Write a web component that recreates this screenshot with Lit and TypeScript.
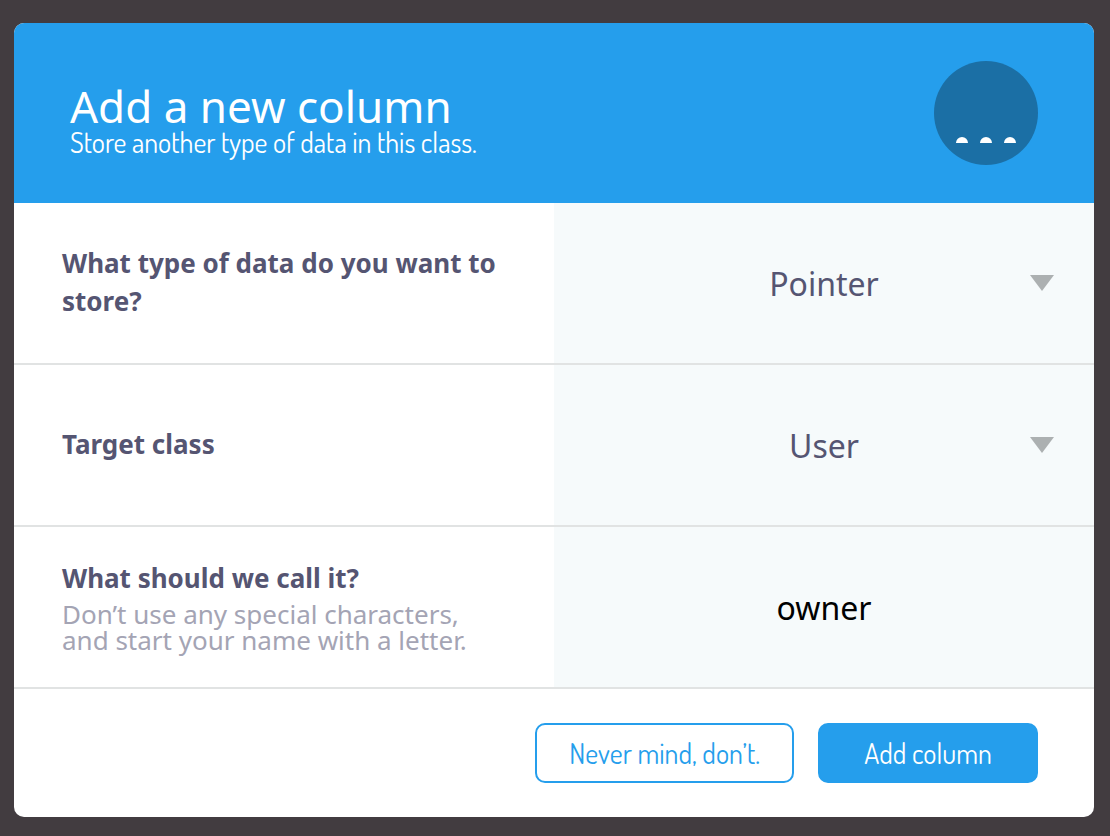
import { LitElement, html, css } from "lit";
import { customElement, state } from "lit/decorators.js";

@customElement("app-root")
export class AppRoot extends LitElement {
  static styles = css`
    :host {
      display: block;
      box-sizing: border-box;
      min-height: 100vh;
      padding: 23px 16px 19px 14px;
      background: #423c40;
      color: #555572;
      font-family: "Noto Sans", sans-serif;
    }
    * {
      box-sizing: border-box;
    }
    .modal {
      overflow: hidden;
      border-radius: 10px;
      background: #fff;
    }
    .header {
      display: flex;
      align-items: center;
      justify-content: space-between;
      gap: 24px;
      min-height: 180px;
      padding: 24px 56px;
      background: #259eec;
      color: #fff;
    }
    .heading {
      padding-top: 14px;
    }
    .title {
      margin: 0;
      font-size: 44px;
      line-height: 44px;
      font-weight: 400;
    }
    .subtitle {
      margin: 0;
      font-family: Dosis, Lato, sans-serif;
      font-size: 28px;
      line-height: 28px;
      font-weight: 400;
    }
    .badge {
      flex: none;
      width: 104px;
      height: 104px;
    }
    .field {
      display: grid;
      grid-template-columns: 1fr 1fr;
      min-height: 162px;
      border-bottom: 2px solid #e1e3e3;
    }
    .text {
      display: flex;
      flex-direction: column;
      justify-content: center;
      padding: 14px 48px 16px;
    }
    .label {
      font-size: 26px;
      line-height: 38px;
      font-weight: 700;
    }
    .hint {
      margin: 4px 0 0;
      color: #a4a4b4;
      font-size: 26px;
      line-height: 26px;
    }
    .control {
      position: relative;
      display: flex;
      background: #f6fafb;
    }
    .input {
      width: 100%;
      margin: 0;
      padding: 2px 40px 0;
      border: 0;
      border-radius: 0;
      background: transparent;
      appearance: none;
      color: #555572;
      font: 400 32px / 44px "Noto Sans", sans-serif;
      text-align: center;
      text-align-last: center;
    }
    .name {
      color: #000;
    }
    .arrow {
      position: absolute;
      top: 50%;
      right: 40px;
      width: 24px;
      height: 16px;
      margin-top: -8px;
      pointer-events: none;
    }
    .footer {
      display: flex;
      justify-content: flex-end;
      gap: 24px;
      padding: 34px 56px;
    }
    .button {
      min-width: 220px;
      height: 60px;
      padding: 0 32px;
      border: 2px solid #259eec;
      border-radius: 10px;
      background: #fff;
      color: #259eec;
      font: 400 28px / 36px Dosis, Lato, sans-serif;
    }
    .primary {
      background: #259eec;
      color: #fff;
    }
  `;

  @state() private type = "Pointer";
  @state() private target = "User";
  @state() private name = "owner";

  private select(id: string, value: string, options: string[], change: (v: string) => void) {
    return html`
      <div class="control">
        <select
          class="input"
          id=${id}
          @change=${(e: Event) => change((e.target as HTMLSelectElement).value)}
        >
          ${options.map((o) => html`<option ?selected=${o === value}>${o}</option>`)}
        </select>
        <svg class="arrow" viewBox="0 0 24 16" aria-hidden="true">
          <path d="M0 0h24L12 16z" fill="#acb0b1" />
        </svg>
      </div>
    `;
  }

  render() {
    return html`
      <form class="modal" @submit=${(e: Event) => e.preventDefault()}>
        <header class="header">
          <div class="heading">
            <h1 class="title">Add a new column</h1>
            <p class="subtitle">Store another type of data in this class.</p>
          </div>
          <svg class="badge" viewBox="0 0 104 104" aria-hidden="true">
            <circle cx="52" cy="52" r="52" fill="#1b6fa5" />
            <path
              d="M22 82a6 6 0 0 1 12 0zM46 82a6 6 0 0 1 12 0zM70 82a6 6 0 0 1 12 0z"
              fill="#fff"
            />
          </svg>
        </header>
        <div class="field">
          <div class="text">
            <label class="label" for="type">What type of data do you want to store?</label>
          </div>
          ${this.select("type", this.type, ["Pointer"], (v) => (this.type = v))}
        </div>
        <div class="field">
          <div class="text">
            <label class="label" for="target">Target class</label>
          </div>
          ${this.select("target", this.target, ["User"], (v) => (this.target = v))}
        </div>
        <div class="field">
          <div class="text">
            <label class="label" for="name">What should we call it?</label>
            <p class="hint" id="hint">
              Don’t use any special characters,<br />and start your name with a letter.
            </p>
          </div>
          <div class="control">
            <input
              class="input name"
              id="name"
              type="text"
              aria-describedby="hint"
              .value=${this.name}
              @input=${(e: Event) => (this.name = (e.target as HTMLInputElement).value)}
            />
          </div>
        </div>
        <footer class="footer">
          <button class="button" type="button">Never mind, don’t.</button>
          <button class="button primary" type="submit">Add column</button>
        </footer>
      </form>
    `;
  }
}
